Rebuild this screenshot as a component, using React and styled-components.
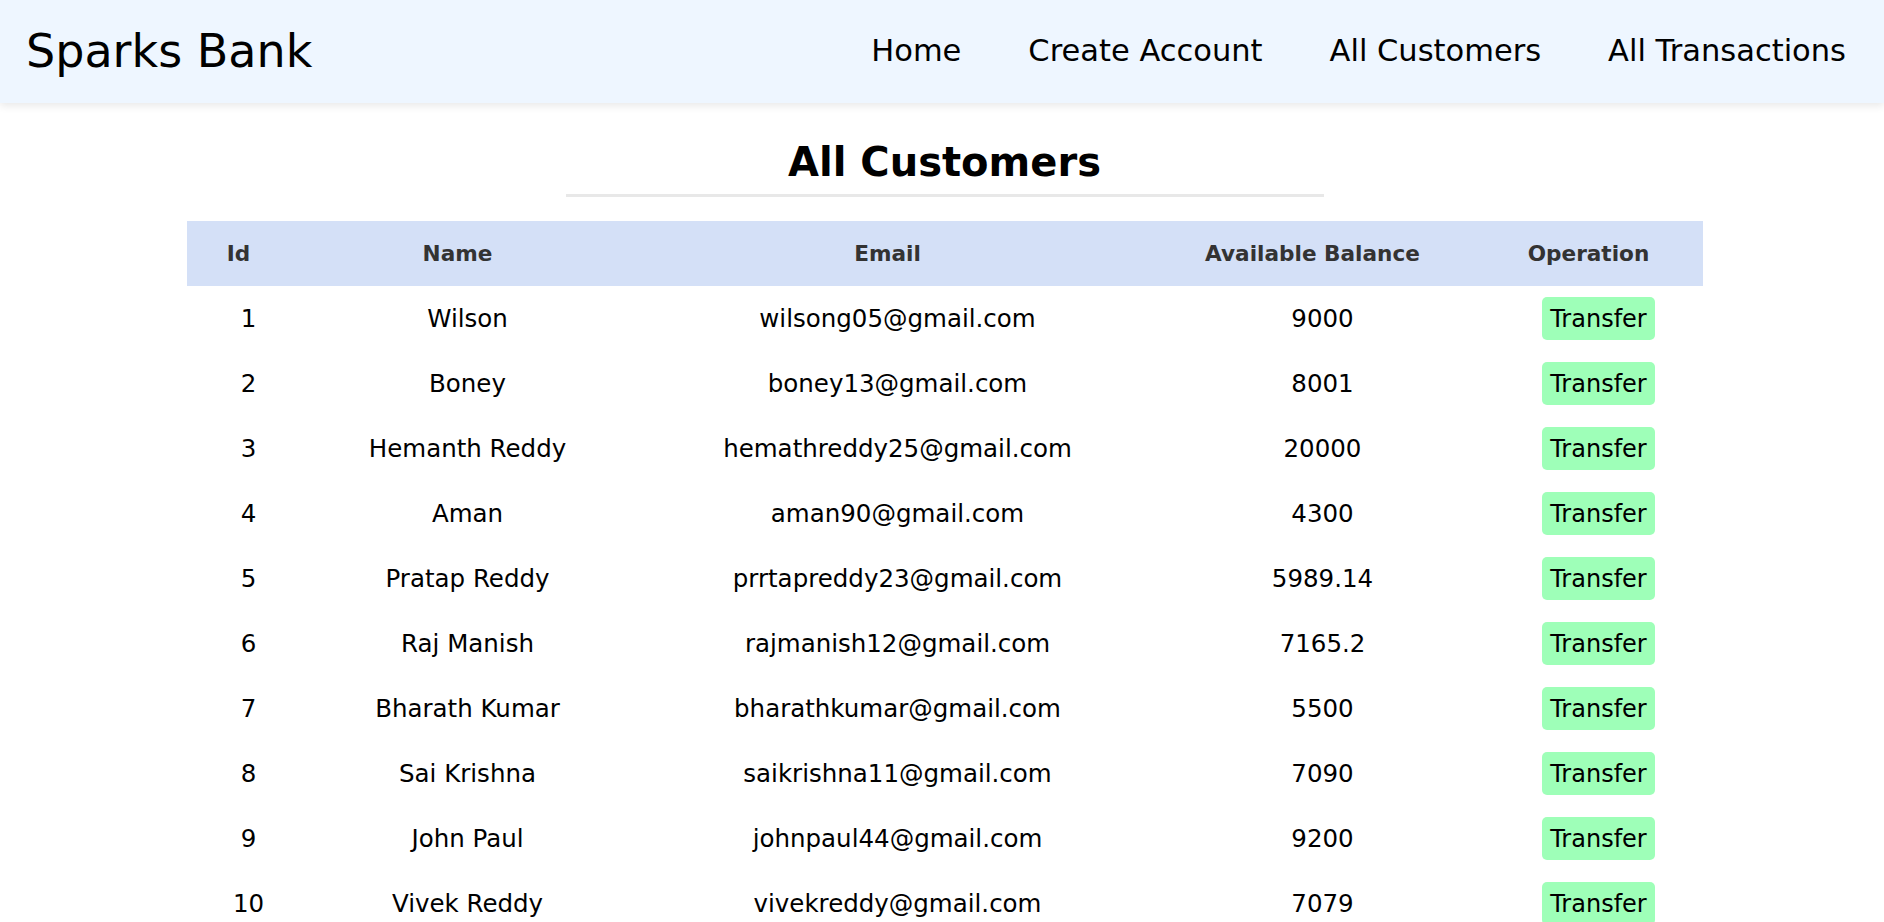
import React from "react";
import styled, { createGlobalStyle } from "styled-components";

const Global = createGlobalStyle`
  html, body {
    margin: 0;
    padding: 0;
    background: #ffffff;
    font-family: "DejaVu Sans", "Liberation Sans", sans-serif;
    color: #000;
  }
  * { box-sizing: border-box; }
`;

const NavBar = styled.header`
  height: 103px;
  background: #eef6ff;
  box-shadow: 0 3px 8px rgba(0, 0, 0, 0.09);
  display: flex;
  align-items: center;
  justify-content: space-between;
  padding: 0 38px 0 26px;
  position: relative;
  z-index: 1;
`;

const Brand = styled.div`
  font-size: 46px;
  font-weight: 400;
  line-height: 1;
  padding-bottom: 2px;
`;

const NavList = styled.nav`
  display: flex;
  align-items: center;
  gap: 67px;
`;

const NavLink = styled.a`
  font-size: 30.5px;
  color: #000;
  text-decoration: none;
  line-height: 1;
  cursor: pointer;
`;

const Main = styled.main`
  display: flex;
  flex-direction: column;
  align-items: center;
  padding-left: 5px;
`;

const Title = styled.h1`
  margin: 35px 0 0;
  font-size: 40px;
  line-height: 48px;
  font-weight: 700;
  text-align: center;
`;

const Rule = styled.div`
  width: 758px;
  height: 3px;
  background: #e8e8e8;
  margin-top: 8px;
`;

const Table = styled.table`
  width: 1516px;
  margin-top: 24px;
  border-collapse: collapse;
  table-layout: fixed;
`;

const Col = styled.col`
  width: ${(p) => p.$w}px;
`;

const HeadRow = styled.tr`
  background: #d4e0f7;
  height: 65px;
`;

const Th = styled.th`
  font-size: 21.6px;
  font-weight: 700;
  color: #333333;
  text-align: center;
  padding: 0;
`;

const Row = styled.tr`
  height: 65px;
`;

const Td = styled.td`
  font-size: 24.5px;
  text-align: center;
  padding: 0 0 0 20px;
  color: #000;
`;

const TransferButton = styled.button`
  font-family: "DejaVu Sans", "Liberation Sans", sans-serif;
  font-size: 24px;
  height: 43px;
  padding: 0 8px 0 8px;
  background: #9effb8;
  color: #000;
  border: none;
  border-radius: 5px;
  cursor: pointer;
  line-height: 1;
`;

const customers = [
  [1, "Wilson", "wilsong05@gmail.com", "9000"],
  [2, "Boney", "boney13@gmail.com", "8001"],
  [3, "Hemanth Reddy", "hemathreddy25@gmail.com", "20000"],
  [4, "Aman", "aman90@gmail.com", "4300"],
  [5, "Pratap Reddy", "prrtapreddy23@gmail.com", "5989.14"],
  [6, "Raj Manish", "rajmanish12@gmail.com", "7165.2"],
  [7, "Bharath Kumar", "bharathkumar@gmail.com", "5500"],
  [8, "Sai Krishna", "saikrishna11@gmail.com", "7090"],
  [9, "John Paul", "johnpaul44@gmail.com", "9200"],
  [10, "Vivek Reddy", "vivekreddy@gmail.com", "7079"],
];

export default function App() {
  return (
    <>
      <Global />
      <NavBar>
        <Brand>Sparks Bank</Brand>
        <NavList>
          <NavLink>Home</NavLink>
          <NavLink>Create Account</NavLink>
          <NavLink>All Customers</NavLink>
          <NavLink>All Transactions</NavLink>
        </NavList>
      </NavBar>
      <Main>
        <Title>All Customers</Title>
        <Rule />
        <Table>
          <colgroup>
            <Col $w={104} />
            <Col $w={334} />
            <Col $w={526} />
            <Col $w={324} />
            <Col $w={228} />
          </colgroup>
          <thead>
            <HeadRow>
              <Th>Id</Th>
              <Th>Name</Th>
              <Th>Email</Th>
              <Th>Available Balance</Th>
              <Th>Operation</Th>
            </HeadRow>
          </thead>
          <tbody>
            {customers.map(([id, name, email, bal]) => (
              <Row key={id}>
                <Td>{id}</Td>
                <Td>{name}</Td>
                <Td>{email}</Td>
                <Td>{bal}</Td>
                <Td>
                  <TransferButton>Transfer</TransferButton>
                </Td>
              </Row>
            ))}
          </tbody>
        </Table>
      </Main>
    </>
  );
}
